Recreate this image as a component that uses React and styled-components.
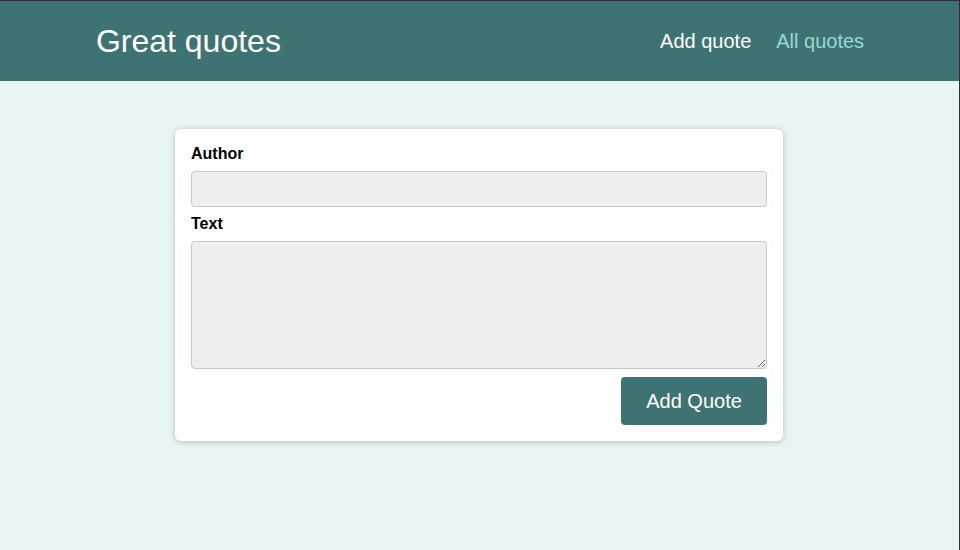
import styled, { createGlobalStyle } from "styled-components";

const GlobalStyle = createGlobalStyle`
  * {
    box-sizing: border-box;
  }

  body {
    margin: 0;
    font-family: "Liberation Sans", Arial, sans-serif;
    background: #e8f5f5;
  }
`;

const navList = [
  { id: 1, title: "Add quote", active: false },
  { id: 2, title: "All quotes", active: true },
];

export default function App() {
  return (
    <Page>
      <GlobalStyle />
      <Header>
        <Logo>Great quotes</Logo>
        <Nav>
          {navList.map((item) => (
            <NavLink key={item.id} href="#" $active={item.active}>
              {item.title}
            </NavLink>
          ))}
        </Nav>
      </Header>
      <Main>
        <Card>
          <Form onSubmit={(e) => e.preventDefault()}>
            <Control>
              <Label htmlFor="author">Author</Label>
              <Input type="text" id="author" />
            </Control>
            <Control>
              <Label htmlFor="text">Text</Label>
              <TextArea id="text" rows="5" />
            </Control>
            <Actions>
              <Button type="submit">Add Quote</Button>
            </Actions>
          </Form>
        </Card>
      </Main>
    </Page>
  );
}

const Page = styled.div`
  min-height: 100vh;
  border-right: 1px solid #2e2e38;
`;

const Header = styled.header`
  height: 81px;
  padding: 0 10%;
  display: flex;
  align-items: center;
  justify-content: space-between;
  background: #3f7373;
  border-top: 1px solid #2e2e38;
`;

const Logo = styled.div`
  color: #ffffff;
  font-size: 32px;
`;

const Nav = styled.nav`
  display: flex;
  gap: 25px;
  margin-right: -1px;
`;

const NavLink = styled.a`
  color: ${({ $active }) => ($active ? "#95d9d6" : "#ffffff")};
  text-decoration: none;
  font-size: 20px;
`;

const Main = styled.main`
  display: flex;
  justify-content: center;
  padding: 48px 1px 0 0;
`;

const Card = styled.div`
  width: 608px;
  padding: 16px;
  background: #ffffff;
  border-radius: 6px;
  box-shadow: 0 1px 6px rgba(0, 0, 0, 0.22);
`;

const Form = styled.form`
  display: flex;
  flex-direction: column;
`;

const Control = styled.div`
  margin-bottom: 8px;
`;

const Label = styled.label`
  display: block;
  font-weight: bold;
  font-size: 16px;
  color: #000000;
  margin-bottom: 8px;
`;

const Input = styled.input`
  display: block;
  width: 100%;
  height: 36px;
  font: inherit;
  background: #eeeeee;
  border: 1px solid #c1cccc;
  border-radius: 4px;
  padding: 4px 8px;
`;

const TextArea = styled.textarea`
  display: block;
  width: 100%;
  height: 128px;
  font: inherit;
  background: #eeeeee;
  border: 1px solid #c1cccc;
  border-radius: 4px;
  padding: 4px 8px;
`;

const Actions = styled.div`
  display: flex;
  justify-content: flex-end;
`;

const Button = styled.button`
  width: 146px;
  height: 48px;
  font-family: inherit;
  font-size: 20px;
  color: #ffffff;
  background: #3f7373;
  border: none;
  border-radius: 4px;
  cursor: pointer;
`;
